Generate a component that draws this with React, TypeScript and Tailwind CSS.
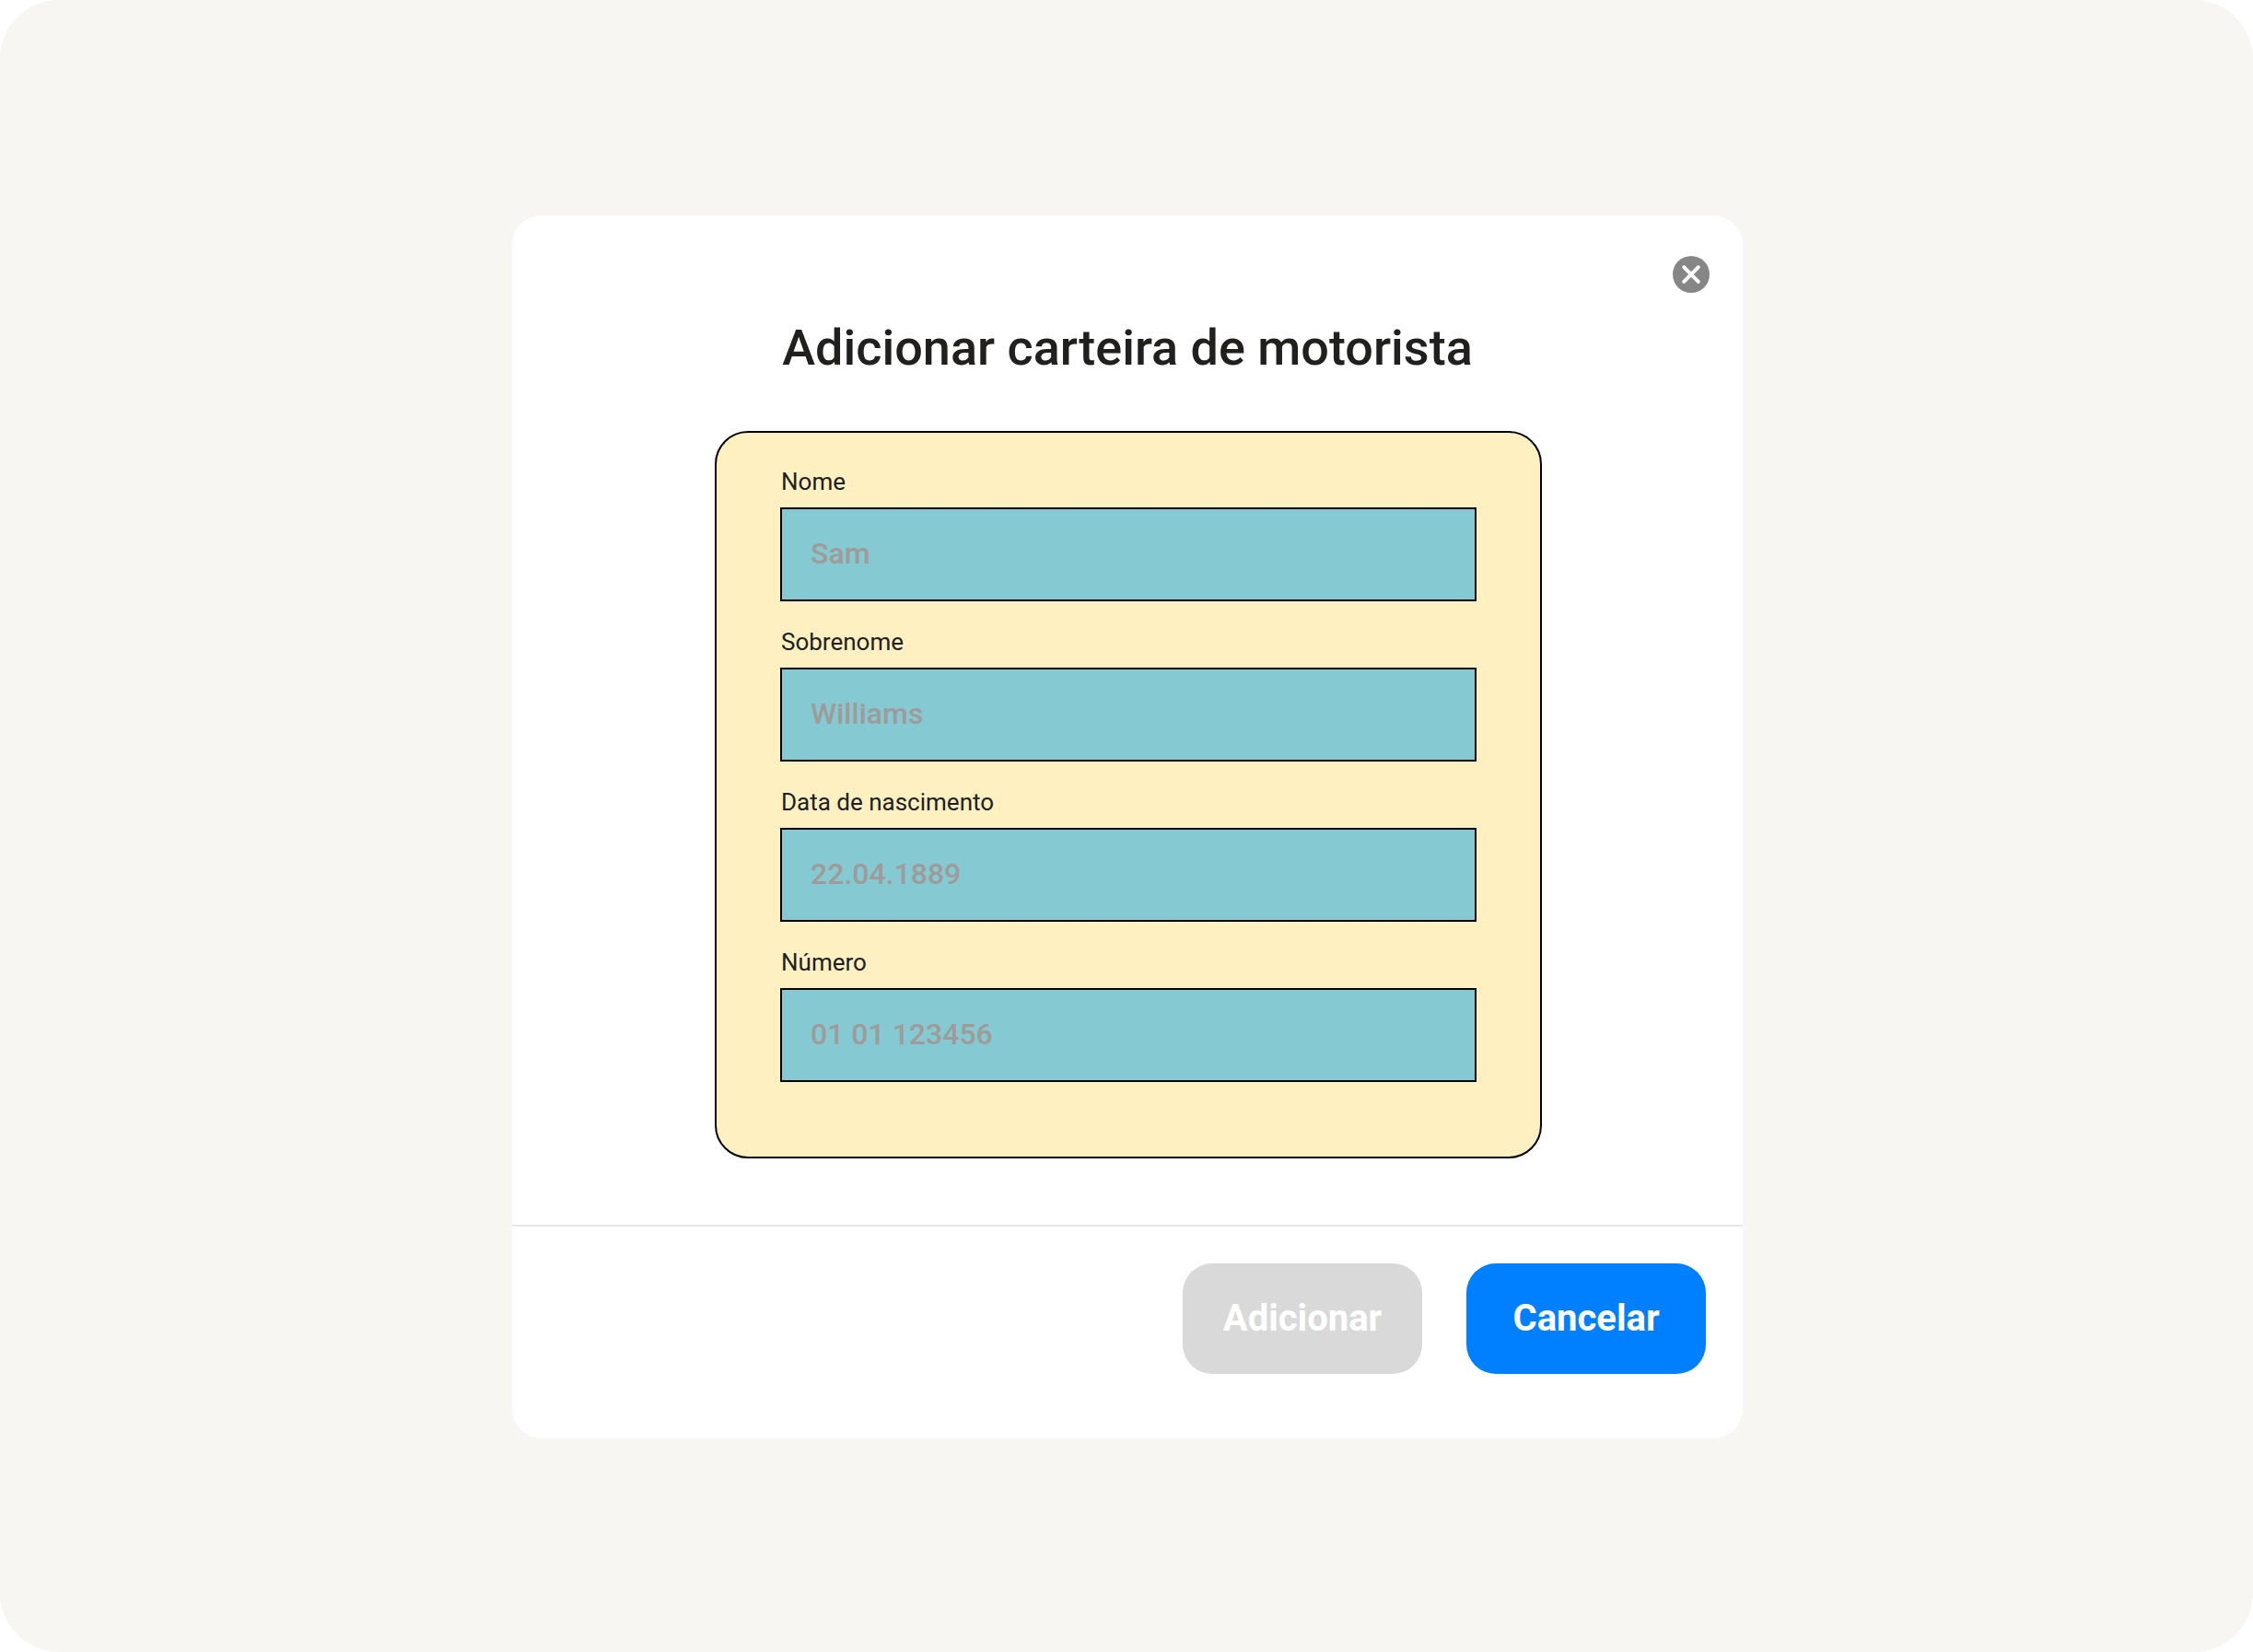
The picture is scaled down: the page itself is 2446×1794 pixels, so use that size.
import React from "react";

const fields = [
  { id: "nome", label: "Nome", placeholder: "Sam" },
  { id: "sobrenome", label: "Sobrenome", placeholder: "Williams" },
  { id: "nascimento", label: "Data de nascimento", placeholder: "22.04.1889" },
  { id: "numero", label: "Número", placeholder: "01 01 123456" },
];

function CloseIcon() {
  return (
    <svg viewBox="0 0 40 40" className="size-10" aria-hidden="true">
      <circle cx="20" cy="20" r="20" fill="#868686" />
      <path d="M12.2 12.2 27.8 27.8M27.8 12.2 12.2 27.8" stroke="#fff" strokeWidth="4" strokeLinecap="round" />
    </svg>
  );
}

function Field({ id, label, placeholder }: { id: string; label: string; placeholder: string }) {
  return (
    <div className="flex flex-col gap-3">
      <label htmlFor={id} className="px-px text-[26px] leading-8 text-[#21201f]">
        {label}
      </label>
      <input
        id={id}
        type="text"
        placeholder={placeholder}
        className="h-[102px] w-full border-2 border-black bg-[#85c9d2] px-[31px] pb-0.5 text-[32px] leading-10 font-medium text-[#21201f] outline-none placeholder:text-[#9e9b98]"
      />
    </div>
  );
}

export default function App() {
  return (
    <div className="min-h-screen bg-white font-[Roboto,sans-serif]">
      <main className="flex min-h-screen items-center justify-center rounded-[64px] bg-[#f7f6f2] pt-0.5 pl-0.5">
        <form
          role="dialog"
          aria-labelledby="titulo"
          className="flex w-full max-w-[1336px] flex-col rounded-[32px] bg-white"
          onSubmit={(e) => e.preventDefault()}
        >
          <div className="flex justify-end px-9 pt-11">
            <button type="button" aria-label="Fechar" className="size-10 rounded-full">
              <CloseIcon />
            </button>
          </div>
          <h1 id="titulo" className="mt-7 text-center text-[54px] leading-16 font-medium text-[#21201f]">
            Adicionar carteira de motorista
          </h1>
          <div className="mt-[58px] flex justify-center pl-0.5">
            <div className="flex w-full max-w-[898px] flex-col gap-7 rounded-[36px] border-2 border-black bg-[#fef0c1] px-[69px] pt-[37px] pb-[81px]">
              {fields.map((f) => (
                <Field key={f.id} {...f} />
              ))}
            </div>
          </div>
          <footer className="mt-[72px] flex justify-end gap-12 border-t-2 border-[#e7e7e5] px-10 pt-10 pb-[70px]">
            <button type="submit" disabled className="h-[120px] w-[260px] rounded-[32px] bg-[#d9d9d9] text-[40px] leading-12 font-bold text-white">
              Adicionar
            </button>
            <button type="button" className="h-[120px] w-[260px] rounded-[32px] bg-[#007fff] text-[40px] leading-12 font-bold text-white">
              Cancelar
            </button>
          </footer>
        </form>
      </main>
    </div>
  );
}
